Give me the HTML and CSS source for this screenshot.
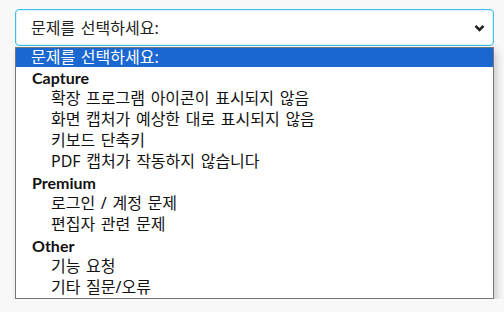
FILE: index.html
```html
<!DOCTYPE html>
<html lang="ko">
<head>
<meta charset="utf-8">
<link rel="stylesheet" href="styles.css">
</head>
<body>
<div class="wrap">
  <div class="select">
    <span class="select-text">문제를 선택하세요:</span>
    <svg class="chev" width="11" height="8" viewBox="0 0 11 8"><polyline points="1.5,1.8 5.5,5.8 9.5,1.8" fill="none" stroke="#222" stroke-width="2.6"/></svg>
  </div>
  <div class="menu">
    <div class="row selected">문제를 선택하세요:</div>
    <div class="row group">Capture</div>
    <div class="row opt">확장 프로그램 아이콘이 표시되지 않음</div>
    <div class="row opt">화면 캡처가 예상한 대로 표시되지 않음</div>
    <div class="row opt">키보드 단축키</div>
    <div class="row opt">PDF 캡처가 작동하지 않습니다</div>
    <div class="row group">Premium</div>
    <div class="row opt">로그인 / 계정 문제</div>
    <div class="row opt">편집자 관련 문제</div>
    <div class="row group">Other</div>
    <div class="row opt">기능 요청</div>
    <div class="row opt">기타 질문/오류</div>
  </div>
</div>
</body>
</html>
```
FILE: styles.css
```css
html, body {
  margin: 0;
  padding: 0;
  background: #f8f8f8;
}
body {
  font-family: "Noto Sans", "Noto Sans CJK KR", sans-serif;
  font-size: 16px;
  color: #1a1a1a;
  word-spacing: 1.5px;
}
.wrap {
  padding: 9px 10px 0 15px;
  width: 479px;
}
.select {
  height: 35px;
  border: 1px solid #3cc0ec;
  border-radius: 4px;
  background: #fff;
  display: flex;
  align-items: center;
  justify-content: space-between;
  padding: 0 8px 0 15px;
  box-shadow: inset 0 0 0 0.5px #b8e6f7;
}
.select-text {
  color: #222;
  line-height: 20px;
}
.chev {
  margin-top: 1px;
}
.menu {
  margin-top: 1px;
  border: 1px solid #767676;
  background: #fff;
  box-shadow: 3px 4px 8px rgba(0,0,0,0.18);
}
.row {
  height: 21px;
  line-height: 21px;
  white-space: nowrap;
  color: #111;
}
.row.selected {
  background: #1a67d2;
  color: #fff;
  padding-left: 15px;
  height: 19px;
  line-height: 19px;
}
.row.group {
  font-weight: 700;
  padding-left: 16px;
  font-family: "Lato", "Noto Sans", sans-serif;
}
.row.opt {
  padding-left: 35px;
}
```
